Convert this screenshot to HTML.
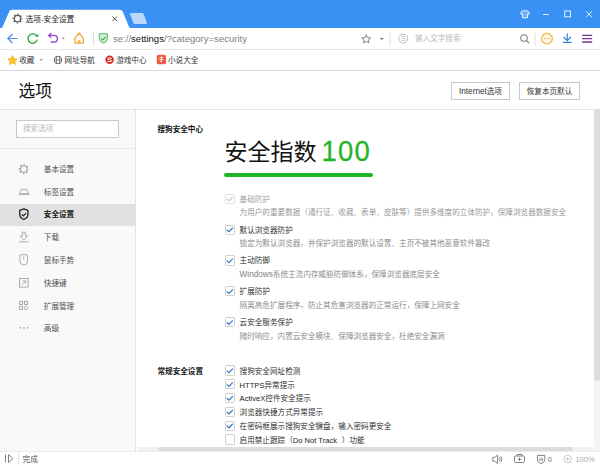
<!DOCTYPE html>
<html><head><meta charset="utf-8">
<style>
*{box-sizing:border-box;margin:0;padding:0}
html,body{width:600px;height:466px;overflow:hidden;background:#fff}
body{font-family:"Liberation Sans","Noto Sans CJK SC",sans-serif;color:#222;position:relative;font-size:9px}
.abs{position:absolute}
#titlebar{left:0;top:0;width:600px;height:27.6px;background:#3a91f4}
#toolbar{left:0;top:27.6px;width:600px;height:22.4px;background:#fff;border-bottom:1px solid #e6e6e6}
#bookbar{left:0;top:50px;width:600px;height:21px;background:#fff;border-bottom:1px solid #d9d9d9}
.t{position:absolute;white-space:nowrap;line-height:1}
#side{left:0;top:109.5px;width:136px;height:341.5px;background:#f9f9f9;border-right:1px solid #e3e3e3}
#hdr{left:0;top:71px;width:600px;height:38.5px;background:#fff;border-bottom:1px solid #e3e3e3}
.nav{position:absolute;left:0;width:135px;height:23px}
.navt{left:43.8px;font-size:7.6px;color:#505050}
.nav.sel{background:#e1e1e1}
.nav.sel .t{color:#111;font-weight:bold}
.btn{position:absolute;height:18.5px;border:1px solid #c8c8c8;background:#fff;font-size:7.6px;color:#333;text-align:center;line-height:17px;white-space:nowrap}
.cb{position:absolute;width:9.7px;height:10.1px;border:1px solid #cfcfcf;border-radius:1.2px;background:#fff}
.lbl{position:absolute;font-size:7.6px;color:#222;font-weight:350;white-space:nowrap;line-height:1}
.desc{position:absolute;font-size:7.6px;color:#838383;font-weight:350;white-space:nowrap;line-height:1}
#status{left:0;top:451px;width:600px;height:15px;background:#fff;border-top:1px solid #ececec}
</style></head><body>
<div id="titlebar" class="abs">
<svg class="abs" style="left:0;top:0" width="600" height="28" viewBox="0 0 600 28">
<path d="M1.6 28 L2.4 27.2 L8.4 13.5 C9.4 10.6 10.4 9.7 12.6 9.7 L119.4 9.7 C121.6 9.7 122.6 10.6 123.5 13.5 L129.2 27.2 L130 28 Z" fill="#fff"/>
<path d="M131 13 L142.3 13 Q143.3 13 143.7 14 L146.8 22.6 Q147.2 23.9 146 23.9 L134.6 23.9 Q133.7 23.9 133.3 22.9 L130.1 14.2 Q129.7 13 131 13Z" fill="#b9d8fb"/>
<!-- tab gear -->
<circle cx="17.5" cy="18.6" r="3.2" fill="none" stroke="#5a5a5a" stroke-width="1.3"/><circle cx="17.5" cy="18.6" r="4.4" fill="none" stroke="#5a5a5a" stroke-width="1.2" stroke-dasharray="1.5 1.956" stroke-dashoffset=".75"/>
<!-- close x -->
<path d="M112.5 16.5l4.5 4.5M117 16.5l-4.5 4.5" stroke="#555" stroke-width="1" fill="none"/>
<!-- window controls -->
<g stroke="#e6f1fe" fill="none" stroke-width="1">
<path d="M521.6 11.5l1.8-1q1.6 1.2 3.2 0l1.8 1l1.2 2.2l-1.5.9l-.6-.8v4h-5v-4l-.6.8l-1.5-.9z" fill="#6fb0f8" stroke-linejoin="round"/>
<path d="M543 14.5h6"/>
<rect x="564.7" y="11" width="5.8" height="5.8"/>
<path d="M586.2 11.3l5.8 5.8M592 11.3l-5.8 5.8"/>
</g>
</svg>
<div class="t" style="left:25px;top:15.5px;left:25.6px;font-size:7.7px;color:#222">选项-安全设置</div>
</div>

<div id="toolbar" class="abs">
<svg class="abs" style="left:0;top:-1.3px" width="600" height="23" viewBox="0 27 600 23">
<!-- back -->
<path d="M17.5 39.5h-9.3M12.5 35l-4.7 4.5l4.7 4.5" stroke="#4a8fe3" stroke-width="1.2" fill="none"/>
<!-- refresh -->
<path d="M36.8 37.1a4.7 4.7 0 1 0 .5 3.6" stroke="#2aa53f" stroke-width="1.3" fill="none"/><path d="M35.3 37.8h3v-3z" fill="#2aa53f"/>
<!-- undo -->
<path d="M48.8 36.4h5.3a3.3 3.3 0 0 1 0 6.6h-3.4" stroke="#9249cb" stroke-width="1.4" fill="none"/><path d="M51.3 34.1l-2.6 2.3l2.6 2.3" stroke="#9249cb" stroke-width="1.3" fill="none"/><path d="M61.8 38.7h3l-1.5 1.6z" fill="#9249cb"/>
<!-- home -->
<path d="M74.8 39.1L79.1 34L83.4 39.1V44.1H74.8Z" stroke="#f0a933" stroke-width="1.2" fill="#fffaf0" stroke-linejoin="round"/><path d="M78.3 44.1v-2.3h1.6v2.3" stroke="#f0a933" stroke-width=".9" fill="#f5c46a"/>
<path d="M93.5 33v13" stroke="#ddd" stroke-width="1"/>
<!-- shield -->
<path d="M99.3 34.8h8v5q0 3-4 4.4q-4-1.4-4-4.4z" fill="#d3efd4" stroke="#55b862" stroke-width="1"/><path d="M101.3 39.3l1.6 1.6l2.7-2.8" stroke="#3fae50" stroke-width="1.1" fill="none"/>
<g transform="translate(0,1)">
<!-- star -->
<path d="M366.2 34.7L367.4 37.6L370.6 37.9L368.2 39.9L368.9 43.0L366.2 41.4L363.5 43.0L364.2 39.9L361.8 37.9L365.0 37.6z" stroke="#7a7a7a" stroke-width=".9" fill="none" stroke-linejoin="round"/>
<path d="M379.8 38h4l-2 2.1z" fill="#777"/>
<path d="M390 33v13" stroke="#ddd" stroke-width="1"/>
<circle cx="403.2" cy="38.6" r="4.5" stroke="#bbb" stroke-width="1" fill="none"/>
<text x="403.2" y="41.3" font-size="7.5" font-family="Liberation Sans" fill="#bbb" text-anchor="middle">S</text>
<!-- search -->
<circle cx="524" cy="38" r="3.3" stroke="#888" stroke-width="1.1" fill="none"/><path d="M526.5 40.5l2.8 2.8" stroke="#888" stroke-width="1.2"/>
<path d="M535 33v13" stroke="#ddd" stroke-width="1"/>
<circle cx="547" cy="38.7" r="5.3" stroke="#eeb232" stroke-width="1.2" fill="#fff8e2"/><circle cx="544.7" cy="38.7" r=".6" fill="#d6a23a"/><circle cx="547" cy="38.7" r=".6" fill="#d6a23a"/><circle cx="549.3" cy="38.7" r=".6" fill="#d6a23a"/>
<path d="M567.2 33.3v7M563.6 37l3.6 3.6l3.6-3.6M562.8 42.3h8.8" stroke="#3a82d8" stroke-width="1.2" fill="none"/>
<path d="M582.2 35.4h10M582.2 38.7h10M582.2 42h10" stroke="#7d3193" stroke-width="1.3"/>
</g>
</svg>
<div class="t" id="url" style="left:113px;top:6.8px;font-size:9.55px;color:#808080">se://<span style="color:#111">settings</span>/?category=security</div>
<div class="t" style="left:415px;top:7.4px;font-size:7.6px;color:#bbb">输入文字搜索</div>
</div>

<div id="bookbar" class="abs">
<svg class="abs" style="left:0;top:0" width="600" height="21" viewBox="0 50 600 21">
<path d="M12.5 55.5l1.5 3l3.3.4l-2.4 2.3l.6 3.3l-3-1.6l-3 1.6l.6-3.3l-2.4-2.3l3.3-.4z" fill="#f8c62c" stroke="#e9a915" stroke-width=".6"/>
<path d="M39.5 59.3h3.4l-1.7 1.8z" fill="#888"/>
<circle cx="58" cy="60" r="3.8" stroke="#555" stroke-width=".9" fill="none"/><path d="M56.5 56.5v7M59.5 56.5v7M54.2 60h7.6" stroke="#555" stroke-width=".7"/>
<circle cx="109.6" cy="59.7" r="4.2" fill="#d42a1e"/><path d="M111.8 58.4q-2-1-3.8-.3q-1.2.7.3 1.3l2.6.6q1.5.6.3 1.4q-1.8.7-3.9-.3" stroke="#fff" stroke-width="1" fill="none"/>
<rect x="156.8" y="54.7" width="9.2" height="9.6" rx="1.6" fill="#f05a42"/><path d="M159.6 57.5h3.6M159.3 59.5h4.2M161.4 56.5v5.5M160 61l1.4 1" stroke="#fff" stroke-width=".8" fill="none"/>
</svg>
<div class="t" style="left:19.2px;top:7.2px;font-size:7.6px;color:#333">收藏</div>
<div class="t" style="left:64.6px;top:7.2px;font-size:7.6px;color:#333">网址导航</div>
<div class="t" style="left:116.2px;top:7.2px;font-size:7.6px;color:#333">游戏中心</div>
<div class="t" style="left:168px;top:7.2px;font-size:7.6px;color:#333">小说大全</div>
</div>

<div id="hdr" class="abs">
<div class="t" style="left:18.5px;top:13.4px;font-size:16.8px;color:#111">选项</div>
<div class="btn" style="left:451px;top:10.5px;width:59px"><span style="font-size:8.2px">Internet</span>选项</div>
<div class="btn" style="left:519px;top:10.5px;width:61px">恢复本页默认</div>
</div>

<div id="side" class="abs"><div class="abs" style="left:0;top:1.5px;width:135px;height:340px">
<div class="abs" style="left:16px;top:9.3px;width:102.5px;height:17.5px;border:1px solid #c9c9c9;background:#fff"></div>
<div class="t" style="left:23px;top:14.3px;font-size:7.6px;color:#bbb">搜索选项</div>
<div class="abs" style="left:0;top:37px;width:135px;height:1px;background:#ececec"></div>
<div class="t navt" style="top:54.7px">基本设置</div>
<div class="t navt" style="top:77.5px">标签设置</div>
<div class="nav sel" style="top:93.1px;height:21.7px"></div>
<div class="t navt" style="top:100.3px;color:#111;font-weight:bold">安全设置</div>
<div class="t navt" style="top:123.1px">下载</div>
<div class="t navt" style="top:145.9px">鼠标手势</div>
<div class="t navt" style="top:168.7px">快捷键</div>
<div class="t navt" style="top:191.5px">扩展管理</div>
<div class="t navt" style="top:214.3px">高级</div>
<svg class="abs" style="left:0;top:0" width="135" height="340" viewBox="0 111 135 340" fill="none" stroke="#a3a3a3" stroke-width=".9">
<circle cx="23.8" cy="169.1" r="4.3" stroke-width="1.5" stroke-dasharray="1.69 1.69" stroke-dashoffset=".85"/><circle cx="23.8" cy="169.1" r="3.3" stroke-width="1"/>
<path d="M21.2 189.6h5.8l1.5 4.2h-8.8zM18.7 194.4h11.2"/>
<path d="M19.7 210.3l4.1-1.5l4.1 1.5v4q0 3.6-4.1 5.2q-4.1-1.6-4.1-5.2z" stroke="#222" stroke-width="1.3" stroke-linejoin="round"/><path d="M21.7 214.3l1.6 1.6l2.7-2.8" stroke="#222" stroke-width="1.2"/>
<path d="M22.4 232.2h2.9v3.8h2.4l-3.850 3.8l-3.850-3.8h2.4z" stroke-linejoin="round"/><path d="M19.2 241.8h9.3"/>
<path d="M19.9 256q0-1.3 1.3-1.3h5q1.3 0 1.3 1.3v5.2q0 3.8-3.8 3.8q-3.8 0-3.8-3.8z"/><path d="M23.7 256.5v3"/>
<rect x="19.5" y="278.5" width="8.6" height="8.6"/><path d="M22 284.6l3.6-3.6M22.9 280.9h2.8v2.8"/>
<rect x="19.5" y="301.3" width="3.1" height="3.1"/><rect x="24.5" y="301.3" width="3.1" height="3.1"/><rect x="19.5" y="306.3" width="3.1" height="3.1"/><path d="M26.050 305.8l2.1 2.1l-2.1 2.1l-2.1-2.1z"/>
<g fill="#a3a3a3" stroke="none"><circle cx="20.2" cy="327.9" r=".8"/><circle cx="24" cy="327.9" r=".8"/><circle cx="27.8" cy="327.9" r=".8"/></g>
</svg>
</div></div>

<!-- content -->
<div class="t" style="left:157.5px;top:125.5px;font-size:7.6px;font-weight:bold;color:#111">搜狗安全中心</div>
<div class="t" style="left:224.5px;top:141.2px;font-size:23px;color:#111">安全指数</div><div class="t" id="hundred" style="left:321.4px;top:137px;font-size:27.5px;letter-spacing:1.2px;color:#22b428;-webkit-text-stroke:.25px #22b428;transform:scaleY(1.08);transform-origin:50% 50%">100</div>
<div class="abs" style="left:224px;top:172.5px;width:149.2px;height:4.8px;border-radius:2.5px;background:#20b526"></div>
<div class="cb" style="left:225.15px;top:193.70px;border-color:#e0e0e0"></div><div class="lbl" style="left:239.6px;top:195.7px;color:#999">基础防护</div>
<div class="desc" style="left:239.6px;top:209.4px;color:#909090">为用户的重要数据（通行证、收藏、表单、皮肤等）提供多维度的立体防护，保障浏览器数据安全</div>
<div class="cb" style="left:225.15px;top:224.57px"></div><div class="lbl" style="left:239.6px;top:226.6px">默认浏览器防护</div>
<div class="desc" style="left:239.6px;top:240.3px">锁定为默认浏览器，并保护浏览器的默认设置、主页不被其他恶意软件篡改</div>
<div class="cb" style="left:225.15px;top:255.44px"></div><div class="lbl" style="left:239.6px;top:257.4px">主动防御</div>
<div class="desc" style="left:239.6px;top:271.2px"><span style="font-size:8.2px;line-height:0">Windows</span>系统主流内存威胁防御体系，保障浏览器底层安全</div>
<div class="cb" style="left:225.15px;top:286.31px"></div><div class="lbl" style="left:239.6px;top:288.3px">扩展防护</div>
<div class="desc" style="left:239.6px;top:302.1px">隔离高危扩展程序，防止其危害浏览器的正常运行，保障上网安全</div>
<div class="cb" style="left:225.15px;top:317.18px"></div><div class="lbl" style="left:239.6px;top:319.2px">云安全服务保护</div>
<div class="desc" style="left:239.6px;top:332.9px">随时响应，内置云安全模块、保障浏览器安全，杜绝安全漏洞</div>
<div class="t" style="left:157.5px;top:368.1px;font-size:7.6px;font-weight:bold;color:#111">常规安全设置</div>
<div class="cb" style="left:225.15px;top:365.45px"></div><div class="lbl" style="left:239.6px;top:367.8px">搜狗安全网址检测</div>
<div class="cb" style="left:225.15px;top:379.25px"></div><div class="lbl" style="left:239.6px;top:381.6px">HTTPS异常提示</div>
<div class="cb" style="left:225.15px;top:393.05px"></div><div class="lbl" style="left:239.6px;top:395.4px">ActiveX控件安全提示</div>
<div class="cb" style="left:225.15px;top:406.85px"></div><div class="lbl" style="left:239.6px;top:409.2px">浏览器快捷方式异常提示</div>
<div class="cb" style="left:225.15px;top:420.65px"></div><div class="lbl" style="left:239.6px;top:423.0px">在密码框展示搜狗安全键盘，输入密码更安全</div>
<div class="cb" style="left:225.15px;top:434.45px"></div><div class="lbl" style="left:239.6px;top:436.8px">启用禁止跟踪（<span style="margin-right:4.8px">Do Not Track</span>）功能</div>
<svg class="abs" style="left:0;top:0;pointer-events:none" width="600" height="466" viewBox="0 0 600 466" fill="none" stroke-width="1.25">
<path d="M226.8 198.85l2.2 2l3.8-4" stroke="#b5d2f2"/>
<path d="M226.8 229.72l2.2 2l3.8-4" stroke="#3879c8"/>
<path d="M226.8 260.59l2.2 2l3.8-4" stroke="#3879c8"/>
<path d="M226.8 291.46l2.2 2l3.8-4" stroke="#3879c8"/>
<path d="M226.8 322.33l2.2 2l3.8-4" stroke="#3879c8"/>
<path d="M226.8 370.60l2.2 2l3.8-4" stroke="#3879c8"/>
<path d="M226.8 384.40l2.2 2l3.8-4" stroke="#3879c8"/>
<path d="M226.8 398.20l2.2 2l3.8-4" stroke="#3879c8"/>
<path d="M226.8 412.00l2.2 2l3.8-4" stroke="#3879c8"/>
<path d="M226.8 425.80l2.2 2l3.8-4" stroke="#3879c8"/>
</svg>

<!-- scrollbars -->
<div class="abs" style="left:594px;top:110px;width:6px;height:341px;background:#f4f4f4"></div>
<div class="abs" style="left:594px;top:110px;width:6px;height:270.5px;background:#dcdcdc;border-radius:0 0 3px 3px"></div>
<div class="abs" style="left:137px;top:446.5px;width:457px;height:5px;background:#f1f1f1"></div>
<div class="abs" style="left:158px;top:446.5px;width:414.5px;height:5px;background:#dcdcdc;border-radius:2.5px"></div>

<div id="status" class="abs">
<svg class="abs" style="left:0;top:0" width="600" height="14" viewBox="0 452 600 14" fill="none" stroke="#777" stroke-width=".9">
<path d="M5.5 454.5v8M8.5 454.5l4.5 4l-4.5 4z"/>
<path d="M18.5 452v13" stroke="#e3e3e3"/>
<path d="M492.8 457.3h2l2.8-2.2v8.4l-2.8-2.2h-2zM499.3 457.6q1.2 1.7 0 3.4M500.8 456.2q2.2 3.1 0 6.2"/>
<rect x="514.5" y="456" width="10" height="6.5" rx="1"/><path d="M517 456v-1.5h5v1.5M519.5 457.5v3.5M517.8 459.3h3.5"/>
<path d="M537.4 455.4h7.4v4.4q0 2.6-3.7 3.8q-3.7-1.2-3.7-3.8z"/><path d="M539.6 460.8v-2M541.1 460.8v-3.4M542.6 460.8v-2.6" stroke-width=".8"/>
<circle cx="567.6" cy="459" r="3.8" stroke="#c4c4c4"/><path d="M565.6 459h4M567.6 457v4M570.3 461.8l1.3 1.3" stroke="#c4c4c4"/>
</svg>
<div class="t" style="left:22.5px;top:3.7px;font-size:7.7px;color:#555">完成</div>
<div class="t" style="left:547.8px;top:3.7px;font-size:7.6px;color:#777">0</div>
<div class="t" style="left:575.3px;top:3.7px;font-size:7.6px;color:#aaa">100%</div>
</div>
</body></html>
